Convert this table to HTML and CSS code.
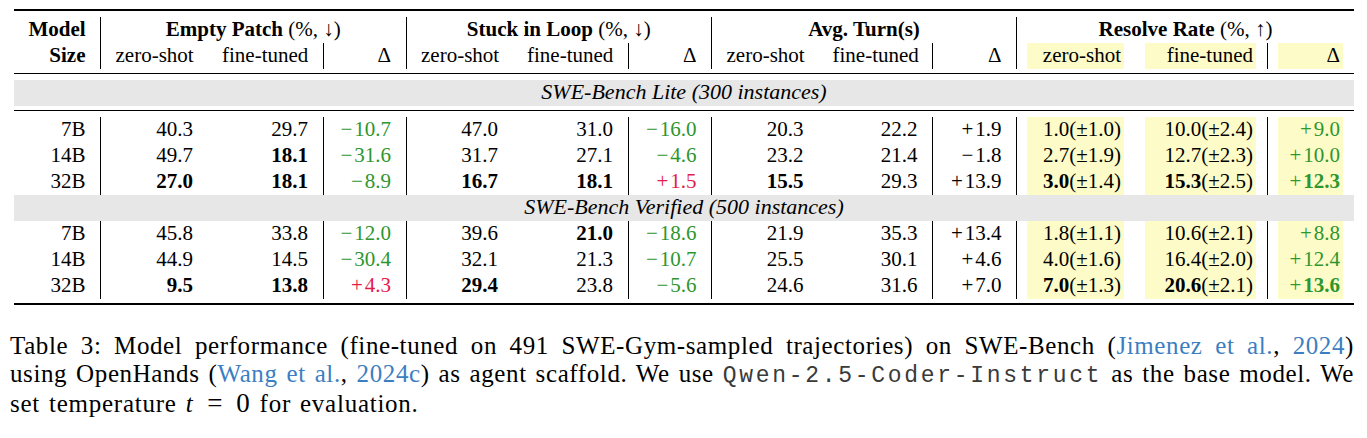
FILE: index.html
```html
<!DOCTYPE html>
<html>
<head>
<meta charset="utf-8">
<title>Table 3</title>
<link rel="stylesheet" href="styles.css">
</head>
<body>
<div class="page">
<table class="t">
<colgroup>
<col class="w0"><col class="w1"><col class="w2"><col class="w3"><col class="w4"><col class="w5"><col class="w6"><col class="w7"><col class="w8"><col class="w9"><col class="w10"><col class="w11"><col class="w12">
</colgroup>
<tbody>
<tr class="rule thick"><td colspan="13"></td></tr>
<tr class="gap"><td colspan="13"></td></tr>
<tr class="hd">
<td class="b">Model</td>
<td colspan="3" class="vl c"><b>Empty Patch</b> (%, ↓)</td>
<td colspan="3" class="vl c"><b>Stuck in Loop</b> (%, ↓)</td>
<td colspan="3" class="vl c"><b>Avg. Turn(s)</b></td>
<td colspan="3" class="vl c"><b>Resolve Rate</b> (%, ↑)</td>
</tr>
<tr class="hd">
<td class="b">Size</td>
<td class="vl">zero-shot</td><td>fine-tuned</td><td class="vl">Δ</td>
<td class="vl">zero-shot</td><td>fine-tuned</td><td class="vl">Δ</td>
<td class="vl">zero-shot</td><td>fine-tuned</td><td class="vl">Δ</td>
<td class="vl y"><span class="yb">zero-shot</span></td><td class="y"><span class="yb">fine-tuned</span></td><td class="vl y"><span class="yb">Δ</span></td>
</tr>
<tr class="gap gap4"><td colspan="13"></td></tr>
<tr class="rule"><td colspan="13"></td></tr>
<tr class="gap"><td colspan="13"></td></tr>
<tr class="band"><td colspan="13">SWE-Bench Lite (300 instances)</td></tr>
<tr class="gap gap4"><td colspan="13"></td></tr>
<tr class="rule"><td colspan="13"></td></tr>
<tr class="gap"><td colspan="13"></td></tr>

<tr class="dr">
<td>7B</td>
<td class="vl">40.3</td><td>29.7</td><td class="vl g"><span class="op">−</span>10.7</td>
<td class="vl">47.0</td><td>31.0</td><td class="vl g"><span class="op">−</span>16.0</td>
<td class="vl">20.3</td><td>22.2</td><td class="vl"><span class="op">+</span>1.9</td>
<td class="vl y"><span class="yb">1.0(±1.0)</span></td><td class="y"><span class="yb">10.0(±2.4)</span></td><td class="vl y"><span class="yb g"><span class="op">+</span>9.0</span></td>
</tr>
<tr class="dr">
<td>14B</td>
<td class="vl">49.7</td><td><b>18.1</b></td><td class="vl g"><span class="op">−</span>31.6</td>
<td class="vl">31.7</td><td>27.1</td><td class="vl g"><span class="op">−</span>4.6</td>
<td class="vl">23.2</td><td>21.4</td><td class="vl"><span class="op">−</span>1.8</td>
<td class="vl y"><span class="yb">2.7(±1.9)</span></td><td class="y"><span class="yb">12.7(±2.3)</span></td><td class="vl y"><span class="yb g"><span class="op">+</span>10.0</span></td>
</tr>
<tr class="dr">
<td>32B</td>
<td class="vl"><b>27.0</b></td><td><b>18.1</b></td><td class="vl g"><span class="op">−</span>8.9</td>
<td class="vl"><b>16.7</b></td><td><b>18.1</b></td><td class="vl r"><span class="op">+</span>1.5</td>
<td class="vl"><b>15.5</b></td><td>29.3</td><td class="vl"><span class="op">+</span>13.9</td>
<td class="vl y"><span class="yb"><b>3.0</b>(±1.4)</span></td><td class="y"><span class="yb"><b>15.3</b>(±2.5)</span></td><td class="vl y"><span class="yb g"><span class="op">+</span><b>12.3</b></span></td>
</tr>

<tr class="band"><td colspan="13">SWE-Bench Verified (500 instances)</td></tr>

<tr class="dr">
<td>7B</td>
<td class="vl">45.8</td><td>33.8</td><td class="vl g"><span class="op">−</span>12.0</td>
<td class="vl">39.6</td><td><b>21.0</b></td><td class="vl g"><span class="op">−</span>18.6</td>
<td class="vl">21.9</td><td>35.3</td><td class="vl"><span class="op">+</span>13.4</td>
<td class="vl y"><span class="yb">1.8(±1.1)</span></td><td class="y"><span class="yb">10.6(±2.1)</span></td><td class="vl y"><span class="yb g"><span class="op">+</span>8.8</span></td>
</tr>
<tr class="dr">
<td>14B</td>
<td class="vl">44.9</td><td>14.5</td><td class="vl g"><span class="op">−</span>30.4</td>
<td class="vl">32.1</td><td>21.3</td><td class="vl g"><span class="op">−</span>10.7</td>
<td class="vl">25.5</td><td>30.1</td><td class="vl"><span class="op">+</span>4.6</td>
<td class="vl y"><span class="yb">4.0(±1.6)</span></td><td class="y"><span class="yb">16.4(±2.0)</span></td><td class="vl y"><span class="yb g"><span class="op">+</span>12.4</span></td>
</tr>
<tr class="dr">
<td>32B</td>
<td class="vl"><b>9.5</b></td><td><b>13.8</b></td><td class="vl r"><span class="op">+</span>4.3</td>
<td class="vl"><b>29.4</b></td><td>23.8</td><td class="vl g"><span class="op">−</span>5.6</td>
<td class="vl">24.6</td><td>31.6</td><td class="vl"><span class="op">+</span>7.0</td>
<td class="vl y"><span class="yb"><b>7.0</b>(±1.3)</span></td><td class="y"><span class="yb"><b>20.6</b>(±2.1)</span></td><td class="vl y"><span class="yb g"><span class="op">+</span><b>13.6</b></span></td>
</tr>
<tr class="gap gap4"><td colspan="13"></td></tr>
<tr class="rule thick"><td colspan="13"></td></tr>
</tbody>
</table>

<div class="caption">
<span class="ln just">Table 3: Model performance (fine-tuned on 491 SWE-Gym-sampled trajectories) on SWE-Bench (<a class="cite">Jimenez et al.</a>, <a class="cite">2024</a>)</span>
<span class="ln just">using OpenHands (<a class="cite">Wang et al.</a>, <a class="cite">2024c</a>) as agent scaffold. We use <code class="mono">Qwen-2.5-Coder-Instruct</code> as the base model. We</span>
<span class="ln last">set temperature <span class="math"><i>t</i><span class="eq">=</span><span class="num">0</span></span> for evaluation.</span>
</div>
</div>
</body>
</html>
```

FILE: styles.css
```css
html, body {
  margin: 0;
  background: #ffffff;
}
body {
  font-family: "Liberation Serif", "Times New Roman", serif;
  color: #000;
}
.page {
  width: 1340px;
  padding: 9px 0 0 14px;
}
.t {
  border-collapse: separate;
  border-spacing: 0;
  table-layout: fixed;
  width: 1340px;
  font-size: 21px;
}
.w0 { width: 86px; }
.w1 { width: 107.5px; }
.w2 { width: 115px; }
.w3 { width: 83px; }
.w4 { width: 107px; }
.w5 { width: 115px; }
.w6 { width: 83.5px; }
.w7 { width: 107px; }
.w8 { width: 114px; }
.w9 { width: 84px; }
.w10 { width: 119px; }
.w11 { width: 132px; }
.w12 { width: 87px; }

.t td {
  padding: 0 14.5px 2px;
  text-align: right;
  white-space: nowrap;
  line-height: 24px;
  height: 24px;
  vertical-align: middle;
}
.t td.b { font-weight: bold; }
.t td.c { text-align: center; }
.t tr.rule td {
  padding: 0;
  height: 1px;
  line-height: 0;
  font-size: 0;
  background: #000;
}
.t tr.rule.thick td { height: 2px; }
.t tr.gap td {
  padding: 0;
  height: 6px;
  line-height: 0;
  font-size: 0;
}
.t tr.gap.gap4 td { height: 4px; }
.t td.vl { border-left: 1px solid #000; }
.t tr.band td {
  background: #e7e7e7;
  text-align: center;
  font-style: italic;
  font-size: 22px;
  padding: 0 0 2px;
}
.t td.y { padding: 0 11px 0 10px; }
.yb {
  display: block;
  background: #fdfcc9;
  padding: 0 3px 2px;
  line-height: 24px;
}
.op { margin-right: 2px; }
.g { color: #2e962e; }
.r { color: #e31c4a; }

.caption {
  margin-top: 27px;
  margin-left: -4px;
  width: 1344px;
  font-size: 25px;
  letter-spacing: 0.6px;
  line-height: 27.5px;
}
.ln { display: block; }
.ln.just {
  text-align: justify;
  text-align-last: justify;
}
.ln.last {
  word-spacing: 2px;
  letter-spacing: 0.75px;
}
.cite { color: #3b7ec2; text-decoration: none; }
.mono {
  font-family: "Liberation Mono", "Courier New", monospace;
  font-size: 23px;
  letter-spacing: 2.7px;
  color: #3a3a3a;
}
.math i { margin-right: 1px; }
.eq { margin: 0 13px; font-size: 27px; }
.num { font-size: 27px; }
```
